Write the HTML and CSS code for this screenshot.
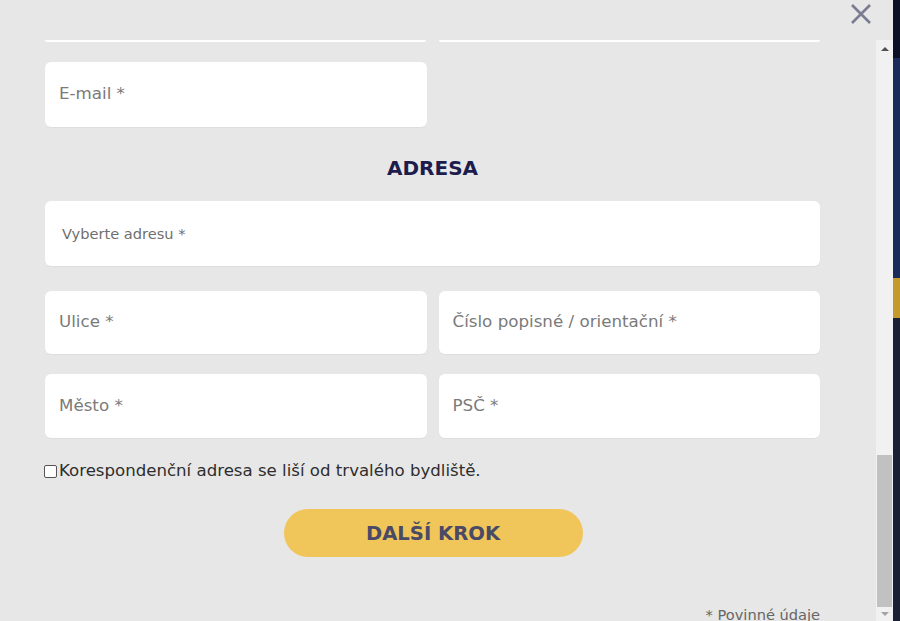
FILE: index.html
```html
<!DOCTYPE html>
<html lang="cs">
<head>
<meta charset="utf-8">
<title>Adresa</title>
<link rel="stylesheet" href="styles.css">
</head>
<body>
<div class="page">
  <div class="modal">
    <div class="modal-head">
      <button class="close" aria-label="Zavřít">
        <svg width="22" height="22" viewBox="0 0 22 22"><path d="M2 2 L20 20 M20 2 L2 20" stroke="#7b7b92" stroke-width="2.6" fill="none"/></svg>
      </button>
    </div>
    <div class="modal-body">
      <div class="content">
        <div class="row row-cut">
          <div class="cut"></div>
          <div class="cut"></div>
        </div>
        <div class="row row-email">
          <div class="field"><span class="ph">E-mail *</span></div>
          <div></div>
        </div>
        <h2 class="heading">ADRESA</h2>
        <div class="field field-wide"><span class="ph ph-small">Vyberte adresu *</span></div>
        <div class="row row-addr">
          <div class="field"><span class="ph">Ulice *</span></div>
          <div class="field"><span class="ph">Číslo popisné / orientační *</span></div>
        </div>
        <div class="row row-city">
          <div class="field"><span class="ph">Město *</span></div>
          <div class="field"><span class="ph">PSČ *</span></div>
        </div>
        <label class="check"><span class="box"></span>Korespondenční adresa se liší od trvalého bydliště.</label>
        <div class="actions"><button class="btn">DALŠÍ KROK</button></div>
        <div class="note">* Povinné údaje</div>
      </div>
      <div class="scrollbar">
        <div class="arrow-up"></div>
        <div class="track"></div>
        <div class="thumb"></div>
        <div class="arrow-down"></div>
      </div>
    </div>
  </div>
  <div class="behind">
    <div class="b1"></div>
    <div class="b2"></div>
    <div class="b3"></div>
    <div class="b4"></div>
  </div>
</div>
</body>
</html>
```

FILE: styles.css
```css
* { box-sizing: border-box; }
html, body { margin: 0; padding: 0; }
body {
  width: 900px;
  height: 621px;
  overflow: hidden;
  font-family: "DejaVu Sans", Inter, sans-serif;
  background: #0f1b3d;
}
.page {
  display: flex;
  width: 900px;
  height: 621px;
}
.modal {
  display: flex;
  flex-direction: column;
  width: 893px;
  height: 621px;
  background: #e7e7e7;
  overflow: hidden;
}
.modal-head {
  position: relative;
  height: 40px;
  flex-shrink: 0;
}
.modal-body {
  flex: 1;
  display: flex;
  min-height: 0;
}
.content {
  flex: 1;
  padding: 0 56px 0 45px;
  display: flex;
  flex-direction: column;
  overflow: hidden;
}
.content > * { flex-shrink: 0; }
.row {
  display: grid;
  grid-template-columns: 1fr 1fr;
  column-gap: 12px;
}
.row-cut { height: 2px; column-gap: 13px; }
.cut {
  height: 2px;
  background: #fff;
  border-radius: 0 0 2px 2px;
}
.row-email { margin-top: 20px; }
.field {
  background: #fff;
  border-radius: 6px;
  height: 65px;
  display: flex;
  align-items: center;
  padding-left: 14px;
  box-shadow: 0 1px 1px rgba(0,0,0,0.04);
}
.ph {
  color: #7a7a7a;
  font-size: 16.7px;
  margin-top: -3px;
}
.row-email .ph { margin-top: -4px; }
.ph-small {
  font-size: 14.6px;
  color: #6f6f6f;
  padding-left: 3px;
  margin-top: -1px;
}
.heading {
  margin: 27px 0 0;
  height: 47px;
  text-align: center;
  font-size: 20px;
  font-weight: 700;
  color: #1c1d4d;
  line-height: 28px;
}
.row-addr { margin-top: 25px; }
.row-addr .field { height: 63px; }
.row-city { margin-top: 20px; }
.row-city .field { height: 64px; }
.check {
  margin-top: 24px;
  display: flex;
  align-items: center;
  font-size: 16.6px;
  color: #2e2e2e;
  line-height: 18px;
  margin-left: -1px;
}
.box {
  width: 13px;
  height: 13px;
  border: 1px solid #555;
  border-radius: 2px;
  background: #fff;
  margin-right: 2px;
}
.actions {
  margin-top: 29px;
  display: flex;
  justify-content: center;
}
.btn {
  width: 299px;
  height: 48px;
  border: none;
  border-radius: 24px;
  background: #f0c55a;
  color: #4a4966;
  font-family: inherit;
  font-size: 19.6px;
  font-weight: 700;
  margin-left: 1px;
}
.note {
  margin-top: 49px;
  text-align: right;
  font-size: 14.6px;
  color: #666;
}
.scrollbar {
  width: 17px;
  background: #f1f1f1;
  display: flex;
  flex-direction: column;
}
.arrow-up {
  height: 17px;
  display: flex;
  justify-content: center;
  align-items: center;
}
.arrow-up::before {
  content: "";
  border-left: 4px solid transparent;
  border-right: 4px solid transparent;
  border-bottom: 4px solid #505050;
}
.track { flex: 1; }
.thumb {
  height: 152px;
  margin: 0 1px;
  background: #c1c1c1;
}
.arrow-down {
  height: 14px;
  display: flex;
  justify-content: center;
  align-items: center;
}
.arrow-down::before {
  content: "";
  border-left: 4px solid transparent;
  border-right: 4px solid transparent;
  border-top: 4px solid #a3a3a3;
}
.close {
  position: absolute;
  top: 3px;
  right: 21px;
  padding: 0;
  border: none;
  background: none;
  width: 22px;
  height: 22px;
}
.behind {
  width: 7px;
  display: flex;
  flex-direction: column;
}
.b1 { height: 58px; background: #0c1026; }
.b2 { height: 220px; background: #1a2a5a; }
.b3 { height: 40px; background: #c49a2a; }
.b4 { flex: 1; background: #1a1f33; }
```
